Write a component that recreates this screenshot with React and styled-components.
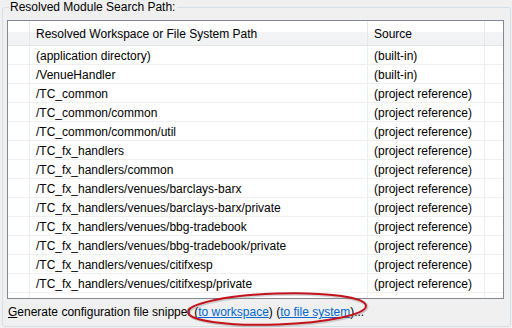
import React from 'react';
import styled, { createGlobalStyle } from 'styled-components';

const rows = [
  ['(application directory)', '(built-in)'],
  ['/VenueHandler', '(built-in)'],
  ['/TC_common', '(project reference)'],
  ['/TC_common/common', '(project reference)'],
  ['/TC_common/common/util', '(project reference)'],
  ['/TC_fx_handlers', '(project reference)'],
  ['/TC_fx_handlers/common', '(project reference)'],
  ['/TC_fx_handlers/venues/barclays-barx', '(project reference)'],
  ['/TC_fx_handlers/venues/barclays-barx/private', '(project reference)'],
  ['/TC_fx_handlers/venues/bbg-tradebook', '(project reference)'],
  ['/TC_fx_handlers/venues/bbg-tradebook/private', '(project reference)'],
  ['/TC_fx_handlers/venues/citifxesp', '(project reference)'],
  ['/TC_fx_handlers/venues/citifxesp/private', '(project reference)'],
];

const COLS = '22px 338px 117px 1fr';

const GlobalStyle = createGlobalStyle`
  html, body {
    margin: 0;
    padding: 0;
    background: #f0f0f0;
  }
  body {
    font-family: "Liberation Sans", Arial, sans-serif;
    font-size: 12px;
    color: #000;
  }
`;

const Page = styled.div`
  width: 512px;
  height: 328px;
  overflow: hidden;
  background: #f0f0f0;
`;

const Group = styled.fieldset`
  margin: 0 1px 0 2px;
  padding: 0 6px 0 4px;
  height: 327px;
  box-sizing: border-box;
  border: 1px solid #d5dfe5;
  border-radius: 3px;
  display: flex;
  flex-direction: column;
`;

const Legend = styled.legend`
  margin-left: 2px;
  padding: 0 2px 0 1px;
  font-size: 12px;
  line-height: 15px;
`;

const Table = styled.div`
  margin-top: 5px;
  height: 279px;
  box-sizing: border-box;
  border: 1px solid #828790;
  background: #fff;
  display: flex;
  flex-direction: column;
`;

const Row = styled.div`
  display: grid;
  grid-template-columns: ${COLS};
  box-sizing: border-box;
  height: ${(p) => p.$h}px;
  flex: ${(p) => (p.$fill ? 1 : 'none')};
  border-bottom: ${(p) => (p.$fill ? 'none' : '1px solid #f0f0f0')};
`;

const HeaderRow = styled(Row)`
  background: linear-gradient(#ffffff 0%, #ffffff 45%, #f3f4f6 46%, #f1f2f4 100%);
  border-bottom: 1px solid #e5e5e5;
`;

const Cell = styled.div`
  padding: 2px 0 0 6px;
  display: flex;
  align-items: center;
  white-space: nowrap;
  overflow: hidden;
  border-right: 1px solid ${(p) => (p.$last ? 'transparent' : p.$head ? '#e3e8ee' : '#e8eef6')};
`;

const Footer = styled.div`
  position: relative;
  margin-top: 6px;
  padding-left: 1px;
  line-height: 15px;
  white-space: nowrap;
`;

const Mnemonic = styled.span`
  text-decoration: underline;
`;

const Link = styled.a`
  color: #0066cc;
  text-decoration: underline;
  cursor: pointer;
`;

const Marker = styled.svg`
  position: absolute;
  left: 170px;
  top: -16px;
  pointer-events: none;
`;

const App = () => (
  <Page>
    <GlobalStyle />
    <Group>
      <Legend>Resolved Module Search Path:</Legend>
      <Table>
        <HeaderRow $h={25}>
          <Cell $head />
          <Cell $head>Resolved Workspace or File System Path</Cell>
          <Cell $head>Source</Cell>
          <Cell $head $last />
        </HeaderRow>
        {rows.map(([path, source], i) => (
          <Row key={i} $h={19}>
            <Cell />
            <Cell>{path}</Cell>
            <Cell>{source}</Cell>
            <Cell $last />
          </Row>
        ))}
        <Row $fill>
          <Cell />
          <Cell />
          <Cell />
          <Cell $last />
        </Row>
      </Table>
      <Footer>
        <Mnemonic>G</Mnemonic>enerate configuration file snippet (<Link>to workspace</Link>) (
        <Link>to file system</Link>)...
        <Marker width="200" height="44" viewBox="0 0 200 44">
          <ellipse cx="101" cy="21" rx="89" ry="15.5" transform="rotate(-2 101 21)"
            fill="none" stroke="#888" strokeOpacity="0.35" strokeWidth="3" />
          <ellipse cx="100" cy="20" rx="89" ry="15.5" transform="rotate(-2 100 20)"
            fill="none" stroke="#c4121d" strokeWidth="2" />
        </Marker>
      </Footer>
    </Group>
  </Page>
);

export default App;
